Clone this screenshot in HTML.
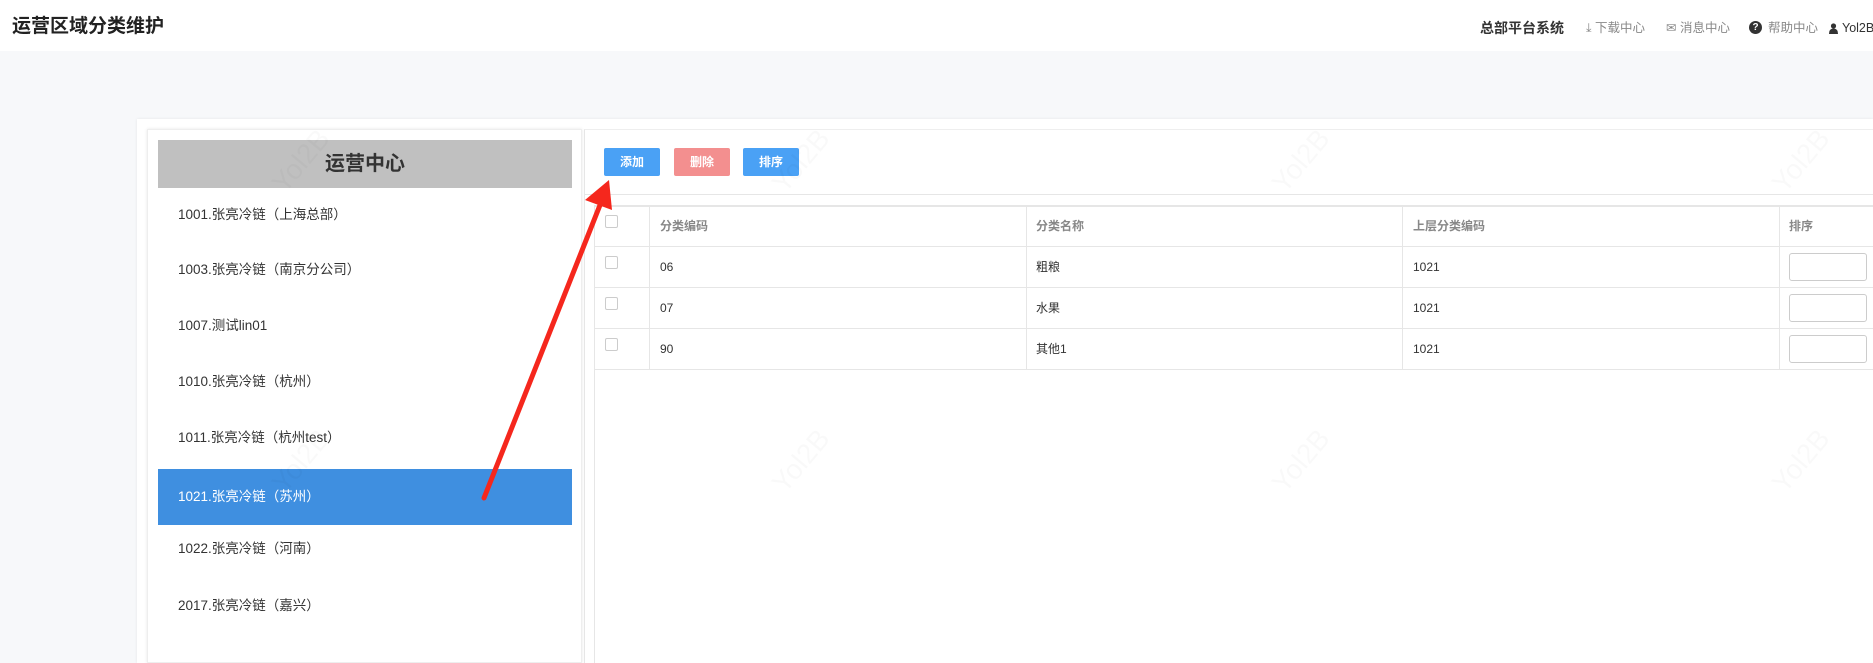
<!DOCTYPE html>
<html><head><meta charset="utf-8"><style>
*{margin:0;padding:0;box-sizing:border-box}
body{width:1873px;height:663px;overflow:hidden;background:#f7f8fa;font-family:"Liberation Sans","Noto Sans CJK SC",sans-serif;position:relative;color:#333}
.abs{position:absolute}
.hdr{left:0;top:0;width:1873px;height:51px;background:#fff}
.title{left:12px;top:11px;font-size:19px;font-weight:bold;color:#222}
.hr{top:20px;font-size:12.5px;color:#888;white-space:nowrap;line-height:16px}
.card{left:137px;top:119px;width:1736px;height:544px;background:#fff;box-shadow:0 0 3px rgba(0,0,0,.08)}
.left{left:147px;top:129px;width:435px;height:534px;background:#fff;border:1px solid #eee;box-shadow:0 0 3px rgba(0,0,0,.1)}
.lh{left:158px;top:140px;width:414px;height:48px;background:#c0c0c0;font-size:20px;font-weight:bold;text-align:center;line-height:48px;color:#333}
.item{left:158px;width:414px;height:56px;line-height:56px;padding-left:20px;font-size:13.5px;color:#333}
.sel{background:#3f8fe0;color:#fff}
.right{left:584px;top:129px;width:1289px;height:534px;background:#fff;border-left:1px solid #e6e6e6;border-top:1px solid #eee}
.btn{top:148px;width:56px;height:28px;color:#fff;font-size:12px;font-weight:bold;text-align:center;line-height:28px;border-radius:2px}
.line{background:#e6e6e6}
.th{font-size:12px;color:#888;font-weight:bold;line-height:14px}
.td{font-size:12px;color:#333;line-height:14px}
.cb{width:13px;height:13px;border:1px solid #ccc;border-radius:2px;background:#fff}
.inp{left:1789px;width:78px;height:28px;border:1px solid #ccc;border-radius:3px;background:#fff}
.wm{font-size:28px;color:rgba(0,0,0,.025);transform:rotate(-50deg)}
</style></head><body>
<div class="abs hdr"></div>
<div class="abs title">运营区域分类维护</div>
<div class="abs hr" style="left:1480px;top:20px;font-size:14px;font-weight:bold;color:#333">总部平台系统</div>
<div class="abs hr" style="left:1586px">⤓ 下载中心</div>
<div class="abs hr" style="left:1666px">✉ 消息中心</div>
<div class="abs" style="left:1749px;top:21px;width:13px;height:13px;border-radius:50%;background:#333;color:#fff;font-size:10px;font-weight:bold;text-align:center;line-height:13px">?</div>
<div class="abs hr" style="left:1768px">帮助中心</div>
<svg class="abs" style="left:1829px;top:23px" width="9" height="11"><circle cx="4.5" cy="3" r="2.6" fill="#333"/><path d="M0 11 Q0 5.5 4.5 5.5 Q9 5.5 9 11Z" fill="#333"/></svg>
<div class="abs hr" style="left:1842px;color:#333">Yol2B</div>

<div class="abs card"></div>
<div class="abs left"></div>
<div class="abs lh">运营中心</div>
<div class="abs item" style="top:187px">1001.张亮冷链（上海总部）</div>
<div class="abs item" style="top:242px">1003.张亮冷链（南京分公司）</div>
<div class="abs item" style="top:298px">1007.测试lin01</div>
<div class="abs item" style="top:354px">1010.张亮冷链（杭州）</div>
<div class="abs item" style="top:410px">1011.张亮冷链（杭州test）</div>
<div class="abs item sel" style="top:469px">1021.张亮冷链（苏州）</div>
<div class="abs item" style="top:521px">1022.张亮冷链（河南）</div>
<div class="abs item" style="top:578px">2017.张亮冷链（嘉兴）</div>

<div class="abs right"></div>
<div class="abs btn" style="left:604px;background:#4aa1f5">添加</div>
<div class="abs btn" style="left:674px;background:#f38f8f">删除</div>
<div class="abs btn" style="left:743px;background:#4aa1f5">排序</div>
<div class="abs line" style="left:585px;top:194px;width:1288px;height:1px"></div>
<div class="abs line" style="left:594px;top:205px;width:1279px;height:2px"></div>
<div class="abs line" style="left:594px;top:205px;width:1px;height:458px"></div>
<div class="abs line" style="left:649px;top:205px;width:1px;height:164px"></div>
<div class="abs line" style="left:1026px;top:205px;width:1px;height:164px"></div>
<div class="abs line" style="left:1402px;top:205px;width:1px;height:164px"></div>
<div class="abs line" style="left:1779px;top:205px;width:1px;height:164px"></div>
<div class="abs line" style="left:594px;top:246px;width:1279px;height:1px"></div>
<div class="abs line" style="left:594px;top:287px;width:1279px;height:1px"></div>
<div class="abs line" style="left:594px;top:328px;width:1279px;height:1px"></div>
<div class="abs line" style="left:594px;top:369px;width:1279px;height:1px"></div>
<div class="abs cb" style="left:605px;top:215px"></div>
<div class="abs cb" style="left:605px;top:256px"></div>
<div class="abs cb" style="left:605px;top:297px"></div>
<div class="abs cb" style="left:605px;top:338px"></div>
<div class="abs th" style="left:660px;top:219px">分类编码</div>
<div class="abs th" style="left:1036px;top:219px">分类名称</div>
<div class="abs th" style="left:1413px;top:219px">上层分类编码</div>
<div class="abs th" style="left:1789px;top:219px">排序</div>
<div class="abs td" style="left:660px;top:260px">06</div>
<div class="abs td" style="left:1036px;top:260px">粗粮</div>
<div class="abs td" style="left:1413px;top:260px">1021</div>
<div class="abs td" style="left:660px;top:301px">07</div>
<div class="abs td" style="left:1036px;top:301px">水果</div>
<div class="abs td" style="left:1413px;top:301px">1021</div>
<div class="abs td" style="left:660px;top:342px">90</div>
<div class="abs td" style="left:1036px;top:342px">其他1</div>
<div class="abs td" style="left:1413px;top:342px">1021</div>
<div class="abs inp" style="left:1789px;top:253px"></div>
<div class="abs inp" style="left:1789px;top:294px"></div>
<div class="abs inp" style="left:1789px;top:335px"></div>

<div class="abs wm" style="left:265px;top:145px">Yol2B</div>
<div class="abs wm" style="left:765px;top:145px">Yol2B</div>
<div class="abs wm" style="left:1265px;top:145px">Yol2B</div>
<div class="abs wm" style="left:1765px;top:145px">Yol2B</div>
<div class="abs wm" style="left:265px;top:445px">Yol2B</div>
<div class="abs wm" style="left:765px;top:445px">Yol2B</div>
<div class="abs wm" style="left:1265px;top:445px">Yol2B</div>
<div class="abs wm" style="left:1765px;top:445px">Yol2B</div>

<svg class="abs" style="left:0;top:0" width="1873" height="663">
<line x1="484" y1="498" x2="602" y2="200" stroke="#f5271d" stroke-width="5" stroke-linecap="round"/>
<polygon points="609,180 585,200 612,210" fill="#f5271d"/>
</svg>
</body></html>
